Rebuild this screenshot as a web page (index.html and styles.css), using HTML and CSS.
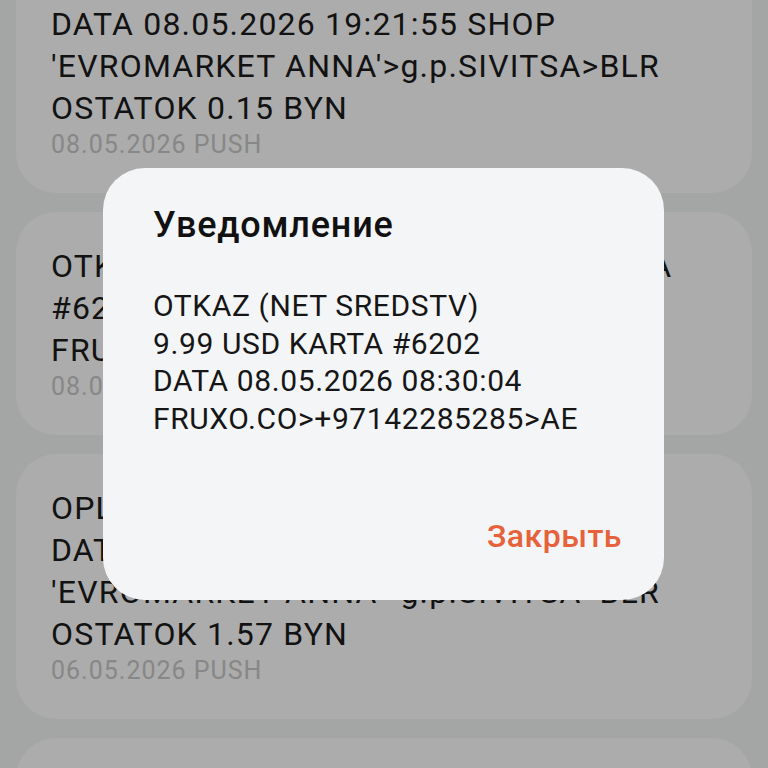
FILE: index.html
```html
<!DOCTYPE html>
<html lang="ru">
<head>
<meta charset="utf-8">
<title>Уведомление</title>
<link rel="stylesheet" href="styles.css">
</head>
<body>
<div class="screen">
  <div class="list">
    <div class="card">
      <div class="msg">OPLATA 4.05 BYN KARTA #6202
DATA 08.05.2026 19:21:55 SHOP
'EVROMARKET ANNA'&gt;g.p.SIVITSA&gt;BLR
OSTATOK 0.15 BYN</div>
      <div class="meta">08.05.2026 PUSH</div>
    </div>
    <div class="card">
      <div class="msg">OTKAZ (NET SREDSTV) 9.99 USD KARTA
#6202 DATA 08.05.2026 08:30:04
FRUXO.CO&gt;+97142285285&gt;AE</div>
      <div class="meta">08.05.2026 PUSH</div>
    </div>
    <div class="card">
      <div class="msg">OPLATA 2.39 BYN KARTA #6202
DATA 06.05.2026 18:44:12 SHOP
'EVROMARKET ANNA'&gt;g.p.SIVITSA&gt;BLR
OSTATOK 1.57 BYN</div>
      <div class="meta">06.05.2026 PUSH</div>
    </div>
    <div class="card">
      <div class="msg">OPLATA 12.40 BYN KARTA #6202
DATA 06.05.2026 09:12:37 SHOP
'EVROMARKET ANNA'&gt;g.p.SIVITSA&gt;BLR</div>
      <div class="meta">06.05.2026 PUSH</div>
    </div>
  </div>

  <div class="dialog">
    <div class="dialog-title">Уведомление</div>
    <div class="dialog-body">OTKAZ (NET SREDSTV)
9.99 USD KARTA #6202
DATA 08.05.2026 08:30:04
FRUXO.CO&gt;+97142285285&gt;AE</div>
    <div class="dialog-actions">
      <span class="dialog-btn">Закрыть</span>
    </div>
  </div>
</div>
</body>
</html>
```

FILE: styles.css
```css
html, body {
  margin: 0;
  padding: 0;
}

body {
  width: 768px;
  height: 768px;
  overflow: hidden;
  background: #a4a5a5;
  font-family: Roboto, "Noto Sans", sans-serif;
  color: #111111;
}

.screen {
  position: relative;
  width: 768px;
  height: 768px;
  overflow: hidden;
}

.list {
  display: flex;
  flex-direction: column;
  gap: 19px;
  padding: 0 16px;
  margin-top: -72px;
}

.card {
  background: #acacac;
  border-radius: 40px;
  padding: 33px 35px 32px;
}

.msg {
  white-space: pre-line;
  font-size: 32px;
  line-height: 42px;
  letter-spacing: 1.2px;
  color: #121212;
}

.meta {
  font-size: 25px;
  line-height: 32px;
  letter-spacing: 1px;
  color: #878787;
}

.dialog {
  position: absolute;
  left: 103px;
  top: 168px;
  width: 561px;
  height: 432px;
  box-sizing: border-box;
  background: #f4f5f7;
  border-radius: 42px;
  padding: 37px 42px 0 50px;
  display: flex;
  flex-direction: column;
}

.dialog-title {
  font-size: 36px;
  line-height: 40px;
  font-weight: 500;
  letter-spacing: 0.8px;
  color: #111111;
}

.dialog-body {
  margin-top: 42px;
  white-space: pre-line;
  font-size: 30px;
  line-height: 37.5px;
  letter-spacing: 0.6px;
  color: #161616;
}

.dialog-actions {
  margin-top: 79px;
  display: flex;
  justify-content: flex-end;
}

.dialog-btn {
  font-size: 32px;
  line-height: 40px;
  font-weight: 500;
  letter-spacing: 0.5px;
  color: #e6623a;
}
```
